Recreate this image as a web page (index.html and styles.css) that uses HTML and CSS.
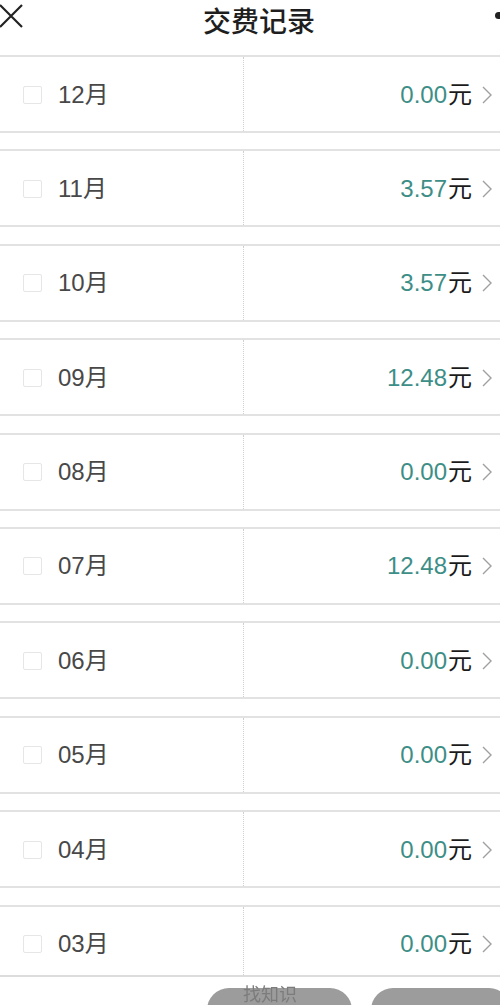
FILE: index.html
```html
<!DOCTYPE html>
<html lang="zh-CN">
<head>
<meta charset="UTF-8">
<meta name="viewport" content="width=device-width, initial-scale=1.0">
<title>交费记录</title>
<link rel="stylesheet" href="styles.css">
</head>
<body>

<header class="topbar">
  <svg class="close" width="24" height="24" viewBox="0 0 24 24">
    <path d="M1 1 L23 23 M23 1 L1 23" stroke="#222" stroke-width="2.2" fill="none"/>
  </svg>
  <h1 class="title">交费记录</h1>
  <span class="more"></span>
</header>

<main class="list">
  <div class="row">
    <div class="cell-left"><span class="check"></span><span class="month">12月</span></div>
    <div class="cell-right"><span class="price"><span class="amount">0.00</span>元</span><svg class="arrow" width="10" height="18" viewBox="0 0 10 18"><polyline points="1,1 9,9 1,17"/></svg></div>
  </div>
  <div class="row">
    <div class="cell-left"><span class="check"></span><span class="month">11月</span></div>
    <div class="cell-right"><span class="price"><span class="amount">3.57</span>元</span><svg class="arrow" width="10" height="18" viewBox="0 0 10 18"><polyline points="1,1 9,9 1,17"/></svg></div>
  </div>
  <div class="row">
    <div class="cell-left"><span class="check"></span><span class="month">10月</span></div>
    <div class="cell-right"><span class="price"><span class="amount">3.57</span>元</span><svg class="arrow" width="10" height="18" viewBox="0 0 10 18"><polyline points="1,1 9,9 1,17"/></svg></div>
  </div>
  <div class="row">
    <div class="cell-left"><span class="check"></span><span class="month">09月</span></div>
    <div class="cell-right"><span class="price"><span class="amount">12.48</span>元</span><svg class="arrow" width="10" height="18" viewBox="0 0 10 18"><polyline points="1,1 9,9 1,17"/></svg></div>
  </div>
  <div class="row">
    <div class="cell-left"><span class="check"></span><span class="month">08月</span></div>
    <div class="cell-right"><span class="price"><span class="amount">0.00</span>元</span><svg class="arrow" width="10" height="18" viewBox="0 0 10 18"><polyline points="1,1 9,9 1,17"/></svg></div>
  </div>
  <div class="row">
    <div class="cell-left"><span class="check"></span><span class="month">07月</span></div>
    <div class="cell-right"><span class="price"><span class="amount">12.48</span>元</span><svg class="arrow" width="10" height="18" viewBox="0 0 10 18"><polyline points="1,1 9,9 1,17"/></svg></div>
  </div>
  <div class="row">
    <div class="cell-left"><span class="check"></span><span class="month">06月</span></div>
    <div class="cell-right"><span class="price"><span class="amount">0.00</span>元</span><svg class="arrow" width="10" height="18" viewBox="0 0 10 18"><polyline points="1,1 9,9 1,17"/></svg></div>
  </div>
  <div class="row">
    <div class="cell-left"><span class="check"></span><span class="month">05月</span></div>
    <div class="cell-right"><span class="price"><span class="amount">0.00</span>元</span><svg class="arrow" width="10" height="18" viewBox="0 0 10 18"><polyline points="1,1 9,9 1,17"/></svg></div>
  </div>
  <div class="row">
    <div class="cell-left"><span class="check"></span><span class="month">04月</span></div>
    <div class="cell-right"><span class="price"><span class="amount">0.00</span>元</span><svg class="arrow" width="10" height="18" viewBox="0 0 10 18"><polyline points="1,1 9,9 1,17"/></svg></div>
  </div>
  <div class="row">
    <div class="cell-left"><span class="check"></span><span class="month">03月</span></div>
    <div class="cell-right"><span class="price"><span class="amount">0.00</span>元</span><svg class="arrow" width="10" height="18" viewBox="0 0 10 18"><polyline points="1,1 9,9 1,17"/></svg></div>
  </div>
</main>

<footer class="bottombar">
  <div class="pill"><span class="pill-label">找知识</span></div>
  <div class="pill"></div>
</footer>

</body>
</html>
```

FILE: styles.css
```css
* {margin: 0; padding: 0; box-sizing: border-box;}
html, body {height: 100%; overflow: hidden;}
body {
  background: #fff;
  color: #222;
  font-family: "Liberation Sans", "Noto Sans CJK SC", sans-serif;
}

/* cabecera */
.topbar {display: flex; justify-content: space-between; align-items: flex-start; height: 55px;}
.close {margin-top: 4px; margin-left: -1px;}
.title {font-size: 28px; font-weight: 500; line-height: 41px; font-family: "Noto Sans CJK SC", sans-serif; color: #1e1e1e;}
.more {width: 5px; height: 7px; margin-top: 12px; background: #222; border-radius: 4px 0 0 4px;}

/* lista */
.list {display: flex; flex-direction: column; gap: 16.4px;}
.row {
  display: flex; height: 78px;
  border-top: 2px solid #e2e2e2; border-bottom: 2px solid #e2e2e2;
}
.cell-left {
  width: 244px; display: flex; align-items: center; gap: 16px;
  padding-left: 23px; padding-top: 1px;
  border-right: 1px dotted #d0d0d0;
}
.check {width: 19px; height: 18px; border: 1px solid #e6e6e6; border-radius: 2px;}
.month {font-size: 24px; line-height: 28px; color: #484848;}
.cell-right {
  flex: 1; display: flex; align-items: center; justify-content: flex-end;
  padding-right: 8px; padding-top: 1px;
}
.price {font-size: 24px; line-height: 28px; color: #1a1a1a;}
.amount {color: #3d8e86; margin-right: 1px;}
.arrow {margin-left: 10px; fill: none; stroke: #a0a0a0; stroke-width: 1.4;}

/* barra inferior encima de la lista */
.bottombar {
  position: fixed; left: 0; right: 0; top: 975px; bottom: 0;
  background: #fff; border-top: 2px solid #dcdcdc;
  display: flex; gap: 19px; padding-left: 207px; padding-top: 11px;
}
.pill {position: relative; flex-shrink: 0; width: 145px; height: 40px; background: #9c9c9c; border-radius: 22px 22px 0 0;}
.pill + .pill {width: 140px;}
.pill-label {
  position: absolute; left: 36px; top: -5px;
  font-size: 18px; color: #7c7c7c; font-family: "Noto Sans CJK SC", sans-serif; line-height: 20px;
}
```
